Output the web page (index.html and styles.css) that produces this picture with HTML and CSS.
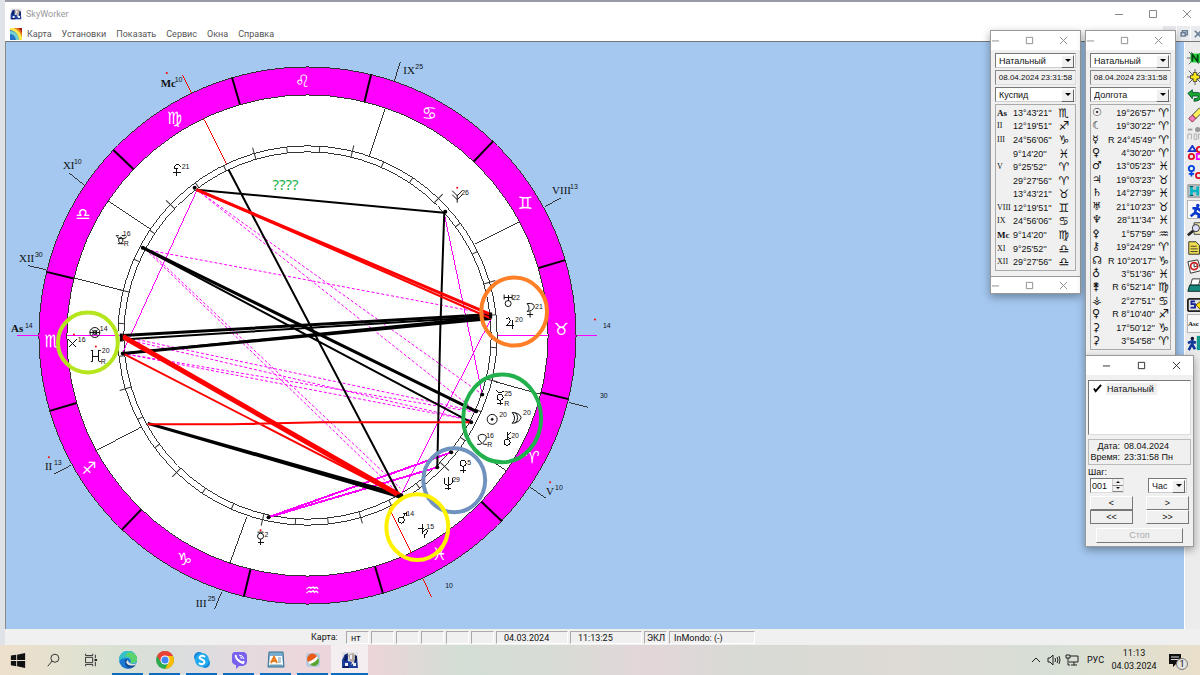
FILE: index.html
```html
<!DOCTYPE html>
<html lang="ru">
<head>
<meta charset="utf-8">
<title>SkyWorker</title>
<link rel="stylesheet" href="styles.css">
</head>
<body>
<svg class="defs" aria-hidden="true">
  <symbol id="i-min" viewBox="0 0 10 10"><path d="M1 5.5h8"/></symbol>
  <symbol id="i-max" viewBox="0 0 10 10"><path d="M1.5 1.5h7v7h-7z"/></symbol>
  <symbol id="i-close" viewBox="0 0 10 10"><path d="M1 1l8 8M9 1l-8 8"/></symbol>
  <symbol id="i-app" viewBox="0 0 18 18"><path fill="#e4e2e4" d="M1 1h16v16H1z"/><path fill="#1d3f9c" d="M1 17V9l3-6 3 2v5l4 1-1 3 3-2V8l3-2 1 11z"/><path fill="#b3a89a" d="M7 4l5-2 3 3-2 6-4-1z"/><path fill="#eef" d="M4 12h3v3H4zM12 12h3v3h-3zM9 4h2v4H9z"/><path fill="#0a1c5e" d="M4 4l3-2-1 7-3 2zM14 4l2 1v5l-2 1zM2 15h6v2H2z"/></symbol>
</svg>
<main class="app">
  <header class="titlebar">
    <svg class="app-icon"><use href="#i-app"/></svg>
    <span class="app-name">SkyWorker</span>
    <div class="window-buttons">
      <button aria-label="Свернуть"><svg class="glyph"><use href="#i-min"/></svg></button>
      <button aria-label="Развернуть"><svg class="glyph"><use href="#i-max"/></svg></button>
      <button aria-label="Закрыть"><svg class="glyph"><use href="#i-close"/></svg></button>
    </div>
  </header>
  <nav class="menubar">
    <svg class="menu-icon" viewBox="0 0 12 12"><path fill="#2672c4" d="M0 0h12v12H0z"/><path fill="#73d2d1" d="M0 3q8 0 9 9H6Q5 6 0 6z"/><path fill="#ffe84d" d="M0 0h12v12H9Q8 3 0 2z"/><path fill="#e8761e" d="M4 0h8v9Q10 3 4 0z"/><path fill="#a51d12" d="M8 0h4v5Q11 2 8 0z"/></svg>
    <button>Карта</button><button>Установки</button><button>Показать</button><button>Сервис</button><button>Окна</button><button>Справка</button>
    <div class="mdi-buttons">
      <button aria-label="Свернуть карту"></button>
      <button aria-label="Восстановить карту"><svg class="glyph" viewBox="0 0 10 10"><path d="M3 3V1h6v5H7M1.500 3.500h5v4h-5z"/></svg></button>
      <button aria-label="Закрыть карту"><svg class="glyph"><use href="#i-close"/></svg></button>
    </div>
  </nav>
  <section class="workspace">
    <svg class="chart" viewBox="5 41 620 588" preserveAspectRatio="xMinYMin meet" role="img" aria-label="Натальная карта">
      <defs>
        <g id="spoke">
          <path class="divider" d="M38 335h28M548 335h28"/>
          <path class="tick" d="M111 335h12M491 335h12"/>
          <path class="tick" transform="rotate(10 307 335)" d="M117 335h6M491 335h6"/>
          <path class="tick" transform="rotate(20 307 335)" d="M117 335h6M491 335h6"/>
        </g>
      </defs>
      <circle class="wheel" cx="307" cy="335" r="269"/>
      <circle class="band" cx="307" cy="335" r="255"/>
      <circle class="hair" cx="307" cy="335" r="269"/>
      <circle class="hair" cx="307" cy="335" r="241"/>
      <circle class="hair" cx="307" cy="335" r="190"/>
      <circle class="hair" cx="307" cy="335" r="184"/>
      <g transform="rotate(13.7 307 335)">
        <use href="#spoke"/>
        <use href="#spoke" transform="rotate(30 307 335)"/>
        <use href="#spoke" transform="rotate(60 307 335)"/>
        <use href="#spoke" transform="rotate(90 307 335)"/>
        <use href="#spoke" transform="rotate(120 307 335)"/>
        <use href="#spoke" transform="rotate(150 307 335)"/>
      </g>

      <path class="hair" d="M107 200l42 28M68 172l15 12M72 277l50 13M27 265l18 4M385 107l-16 48M400 61l-6 19M519 221l-44 22M545 206l16-9M494 381l47 13M569 402l19 5M495 463l12 8M530 487l16 11M246 517l-17 47M221 592l-7 17M140 427l-46 24M70 465l-17 9"/>
      <path class="cusp-mc" d="M203 118l23 45M182 74l9 18M389 508l22 45M423 579l8 18"/>
      <path class="cusp-as" d="M16 335h22M66 335h54M498 335h50M577 335h20"/>

      <g class="aspect dashed">
        <path d="M196 189L482 394M196 189L476 411M145 249L491 314M145 249L398 493M148 250L400 488M122 336L476 411M122 338L471 420M122 353L476 412M122 353L471 420"/>
      </g>
      <g class="aspect trine">
        <path d="M196 190L122 352M444 213L482 394M491 318L401 494"/>
        <path class="mid" d="M268 517L451 452M268 517L437 467"/>
      </g>
      <g class="aspect black">
        <path d="M196 189L444 212M228 169L399 495M145 249L471 422M122 339L491 316"/>
        <path class="mid" d="M444 212L440 330L437 467M122 353L491 316"/>
        <path class="heavy" d="M142 247L476 411M122 335L491 314M122 353L491 318M147 423L398 494M147 423L401 497"/>
      </g>
      <g class="aspect red">
        <path class="thick" d="M122 336L399 495"/>
        <path d="M122 353L398 495M147 424L230 424L320 422H471M196 189L491 318"/>
        <path class="heavy" d="M196 189L491 314"/>
      </g>
      <g class="dots">
        <circle cx="194" cy="187" r="2"/><circle cx="142" cy="247" r="2"/><circle cx="445" cy="211" r="2"/><circle cx="482" cy="394" r="2"/><circle cx="476" cy="411" r="2"/><circle cx="471" cy="422" r="2"/><circle cx="451" cy="452" r="2"/><circle cx="437" cy="467" r="2"/><circle cx="268" cy="517" r="2"/><circle cx="398" cy="496" r="2"/><circle cx="401" cy="495" r="2"/><circle cx="122" cy="353" r="2"/><path d="M119 333h3v8h-3zM489 312h3v6h-3z"/>
      </g>

      <g class="sign">
        <text x="302" y="86">♌&#xFE0E;</text><text x="429" y="118">♋&#xFE0E;</text><text x="525" y="208">♊&#xFE0E;</text><text x="561" y="335">♉&#xFE0E;</text><text x="532" y="463">♈&#xFE0E;</text><text x="439" y="560">♓&#xFE0E;</text><text x="312" y="596">♒&#xFE0E;</text><text x="184" y="565">♑&#xFE0E;</text><text x="88" y="474">♐&#xFE0E;</text><text x="51" y="347">♏&#xFE0E;</text><text x="82" y="219">♎&#xFE0E;</text><text x="174" y="123">♍&#xFE0E;</text>
      </g>

      <g class="house">
        <text class="strong" x="160" y="86">Mc</text><text x="62" y="168">XI</text><text x="18" y="261">XII</text><text class="strong" x="10" y="332">As</text><text x="44" y="470">II</text><text x="195" y="607">III</text><text x="403" y="73">IX</text><text x="552" y="193">VIII</text><text x="546" y="495">V</text>
      </g>

      <g class="planet">
        <path class="bold" d="M180 166q-3-4-6-1-1 3 3 3-4 1-4-2"/><path class="bold" d="M176 168v7M172 172h8"/>
        <path d="M115 235h3M121 235h3M117 243h3q-3-2-2-5 2-3 4 0 1 3-2 5h3M116 236q1 2 5 2t5-2"/>
        <path d="M452 190l5 5 5-5M452 194l5 5 5-5M457 194v8"/>
        <circle cx="94" cy="332" r="5"/><circle cx="94" cy="332" r="2"/><path d="M91 329l6 6M97 329l-6 6M89 332h10"/>
        <path class="bold" d="M68 339l8 8M76 339l-8 8"/>
        <path class="bold" d="M92 350v11M98 350v11"/><path d="M92 356h6M90 350h2M98 350h2M90 361h2M98 361h2"/>
        <circle cx="508" cy="303" r="3"/><path class="bold" d="M508 300v-6M504 297h8"/><path d="M504 294v5M512 294v5"/>
        <path class="bold" d="M506 318q4-2 4 2 0 3-4 5h8M512 319v9"/>
        <path d="M527 303q8-1 7 4-2 4-7 4 4-3 0-8zM530 311v6M527 314h6"/>
        <circle class="bold" cx="500" cy="397" r="3"/><path class="bold" d="M496 390q4 5 8 0M500 400v5M497 403h6"/>
        <circle cx="492" cy="419" r="5"/><circle class="dot" cx="492" cy="419" r="1"/>
        <path d="M512 412q8 1 9 5-1 5-9 6 5-5 0-11zM515 412q5 5 0 11"/>
        <path d="M477 444h3q2 0 1-2-4-3-3-6 1-2 4-2t4 2q1 3-3 6-1 2 1 2h3"/>
        <circle class="bold" cx="507" cy="442" r="3"/><path class="bold" d="M507 439v-7M507 436l4-4M507 436l4 3"/>
        <circle class="bold" cx="463" cy="463" r="3"/><path class="bold" d="M463 466v7M460 470h6"/>
        <path class="bold" d="M444 478v4q0 3 4 3t4-3v-4M448 477v13M445 488h6"/>
        <circle class="bold" cx="401" cy="520" r="3"/><path class="bold" d="M403 517l3-5M403 513h3v3"/>
        <path class="bold" d="M422 524v10M423 531q4-3 4 0 0 2-3 4v3M418 528h6"/>
        <circle cx="260" cy="536" r="3"/><path class="bold" d="M260 539v6M257 542h6"/><path d="M257 532h6"/>
      </g>

      <g class="deg">
        <text x="174" y="81">10</text><text x="73" y="163">10</text><text x="34" y="256">30</text><text x="24" y="327">14</text><text x="53" y="465">13</text><text x="207" y="601">25</text><text x="415" y="68">25</text><text x="570" y="188">13</text><text x="603" y="327">14</text><text x="600" y="398">30</text><text x="555" y="490">10</text><text x="445" y="588">10</text>
        <text x="181" y="168">21</text><text x="122" y="235">16</text><text x="123" y="245">R</text><text x="461" y="194">26</text><text x="99" y="330">14</text><text x="77" y="342">16</text><text x="101" y="353">20</text><text x="100" y="364">R</text><text x="512" y="299">22</text><text x="535" y="308">21</text><text x="515" y="321">20</text><text x="504" y="396">25</text><text x="504" y="406">R</text><text x="499" y="417">20</text><text x="523" y="415">20</text><text x="486" y="438">16</text><text x="487" y="447">R</text><text x="511" y="438">20</text><text x="467" y="465">5</text><text x="452" y="482">29</text><text x="406" y="516">14</text><text x="426" y="529">15</text><text x="264" y="537">2</text>
      </g>
      <g class="red-dots"><circle cx="166" cy="72" r="1"/><circle cx="457" cy="187" r="1"/><circle cx="73" cy="334" r="1"/><circle cx="95" cy="346" r="1"/><circle cx="48" cy="457" r="1"/><circle cx="260" cy="530" r="1"/><circle cx="550" cy="482" r="1"/><circle cx="595" cy="319" r="1"/></g>
      <g class="mark">
        <circle class="lime" cx="87" cy="342" r="30"/>
        <ellipse class="blue" cx="454" cy="480" rx="31" ry="32"/>
        <ellipse class="green" cx="502" cy="418" rx="39" ry="44"/>
        <ellipse class="orange" cx="514" cy="311" rx="33" ry="34"/>
        <ellipse class="yellow" cx="417" cy="527" rx="31" ry="33"/>
      </g>
      <text class="query" x="272" y="189">????</text>
    </svg>

    <aside class="toolbar">
      <button aria-label="Новая карта"><svg viewBox="0 0 18 18"><path stroke="#555" d="M2 2l14 14M16 2L2 16M0 9h18"/><path fill="#22d43c" d="M4 4h11v10H4z"/><path stroke="#041" stroke-width="2" d="M6 13V5l6 8V5"/></svg></button>
      <button aria-label="Солнце"><svg viewBox="0 0 18 18"><path stroke="#555" d="M2 2l14 14M16 2L2 16M9 0v18M0 9h18"/><path fill="#ffe818" stroke="#443" d="M7 4h4v3h3v4h-3v3H7v-3H4V7h3z"/></svg></button>
      <button aria-label="Отменить"><svg viewBox="0 0 18 18"><path fill="#1ca62e" stroke="#053" d="M1 6l5-4v3h6q5 1 4 6-2 4-8 4v-3q5 0 5-3H6v3z"/></svg></button>
      <button aria-label="Стереть"><svg viewBox="0 0 18 18"><path fill="#fff25a" stroke="#333" d="M6 9l8-8 4 4-8 8z"/><path fill="#f17bc7" stroke="#822" d="M2 13l4-4 4 4-4 4z"/></svg></button>
      <button aria-label="Перейти" disabled><svg viewBox="0 0 18 18"><path stroke="#999" stroke-width="2" d="M1 4h5"/><circle fill="#999" cx="12" cy="4" r="3"/><path stroke="#aaa" d="M1 15V9h4v6M8 9h3v6H8zM13 15V9h5"/></svg></button>
      <button aria-label="Аспекты"><svg viewBox="0 0 18 18"><path stroke="#13c" stroke-width="2" d="M2 7l4-6 4 6z"/><circle stroke="#d12" stroke-width="2" cx="14" cy="5" r="3"/><circle stroke="#d12" stroke-width="2" cx="5" cy="13" r="3"/><path stroke="#e0f" stroke-width="2" d="M11 10h6v6h-6z"/></svg></button>
      <button aria-label="Синастрия"><svg viewBox="0 0 18 18"><circle stroke="#04d" stroke-width="2" cx="5" cy="5" r="3"/><path stroke="#04d" stroke-width="2" d="M5 8v6M2 11h6"/><circle stroke="#d12" stroke-width="2" cx="13" cy="13" r="3"/><path stroke="#d12" stroke-width="2" d="M15 10l3-4"/></svg></button>
      <button aria-label="Дома"><svg viewBox="0 0 18 18"><path fill="#b8c5c8" stroke="#888" d="M1 2h16v14H1z"/><path stroke="#06b5c4" stroke-width="3" d="M5 4v10M12 4v10M5 9h7"/><path stroke="#044" d="M3 4h4M3 14h4"/></svg></button>
      <button class="pressed" aria-label="Динамика"><svg viewBox="0 0 18 18"><circle fill="#0b38cc" cx="11" cy="4" r="2"/><path stroke="#0b38cc" stroke-width="3" d="M5 7h6l3 3M9 7l-1 5 4 2v4M8 12l-5 4"/></svg></button>
      <button aria-label="Лупа"><svg viewBox="0 0 18 18"><path fill="#eee9b0" stroke="#333" d="M8 2h7l3 4v9H8z"/><circle fill="#ddf" stroke="#222" cx="10" cy="8" r="4"/><path stroke="#222" stroke-width="3" d="M7 11l-6 5"/></svg></button>
      <button aria-label="Текст"><svg viewBox="0 0 18 18"><path fill="#f2df50" stroke="#222" d="M2 2h8l4 4v10H2z"/><path stroke="#333" d="M4 7h7M4 10h8M4 13h8"/></svg></button>
      <button aria-label="Время"><svg viewBox="0 0 18 18"><path fill="#fff" stroke="#222" d="M1 3l11-2 4 12-12 3z"/><circle stroke="#c22" stroke-width="2" cx="8" cy="8" r="4"/><path stroke="#222" d="M8 5v4l3-1"/></svg></button>
      <button aria-label="Печать"><svg viewBox="0 0 18 18"><path fill="#fff" stroke="#222" d="M6 1h9l-2 7H4z"/><path fill="#16877b" stroke="#022" d="M3 8h14v7H1z"/></svg></button>
      <button aria-label="Сохранить"><svg viewBox="0 0 18 18"><rect fill="#ddd" stroke="#222" stroke-width="2" x="1" y="2" width="17" height="14" rx="2"/><path stroke="#129" stroke-width="2" d="M9 5H5v3h4v4H4"/><path fill="#ffe200" stroke="#540" d="M10 9l5-4v3h3v3h-3v3z"/></svg></button>
      <button class="pressed word">Asc</button>
      <button aria-label="Выход"><svg viewBox="0 0 18 18"><path fill="#149b90" d="M11 1h7v16h-7z"/><circle fill="#113" cx="6" cy="4" r="2"/><path stroke="#113a99" stroke-width="3" d="M6 6v5l3 5M5 11l-3 6M1 9l5-2 4 2"/></svg></button>
    </aside>
  </section>
  <footer class="statusbar">
    <span class="status-label">Карта:</span>
    <span class="cell s">нт</span><span class="cell s"></span><span class="cell s"></span><span class="cell s"></span><span class="cell s"></span><span class="cell s"></span>
    <span class="cell m">04.03.2024</span><span class="cell m">11:13:25</span><span class="cell s flush">ЭКЛ</span><span class="cell l">InMondo: (-)</span>
  </footer>
</main>

<section class="float cusps">
  <div class="float-title">
    <button aria-label="Свернуть"><svg class="glyph"><use href="#i-min"/></svg></button><button aria-label="Развернуть"><svg class="glyph"><use href="#i-max"/></svg></button><button aria-label="Закрыть"><svg class="glyph"><use href="#i-close"/></svg></button>
  </div>
  <div class="float-body">
    <div class="combo"><select aria-label="Карта"><option>Натальный</option></select></div>
    <output class="stamp">08.04.2024 23:31:58</output>
    <div class="combo"><select aria-label="Показатель"><option>Куспид</option></select></div>
    <div class="list">
      <table class="short" aria-label="Куспиды">
        <tr><th>As</th><td>13°43'21''</td><td>♏&#xFE0E;</td></tr>
        <tr><th class="thin">II</th><td>12°19'51''</td><td>♐&#xFE0E;</td></tr>
        <tr><th class="thin">III</th><td>24°56'06''</td><td>♑&#xFE0E;</td></tr>
        <tr><th></th><td>9°14'20''</td><td>♓&#xFE0E;</td></tr>
        <tr><th class="thin">V</th><td>9°25'52''</td><td>♈&#xFE0E;</td></tr>
        <tr><th></th><td>29°27'56''</td><td>♈&#xFE0E;</td></tr>
        <tr><th></th><td>13°43'21''</td><td>♉&#xFE0E;</td></tr>
        <tr><th class="thin">VIII</th><td>12°19'51''</td><td>♊&#xFE0E;</td></tr>
        <tr><th class="thin">IX</th><td>24°56'06''</td><td>♋&#xFE0E;</td></tr>
        <tr><th>Mc</th><td>9°14'20''</td><td>♍&#xFE0E;</td></tr>
        <tr><th class="thin">XI</th><td>9°25'52''</td><td>♎&#xFE0E;</td></tr>
        <tr><th class="thin">XII</th><td>29°27'56''</td><td>♎&#xFE0E;</td></tr>
      </table>
    </div>
  </div>
  <div class="float-title second">
    <button aria-label="Свернуть"><svg class="glyph"><use href="#i-min"/></svg></button><button aria-label="Развернуть"><svg class="glyph"><use href="#i-max"/></svg></button><button aria-label="Закрыть"><svg class="glyph"><use href="#i-close"/></svg></button>
  </div>
</section>

<section class="float planets">
  <div class="float-title">
    <button aria-label="Свернуть"><svg class="glyph"><use href="#i-min"/></svg></button><button aria-label="Развернуть"><svg class="glyph"><use href="#i-max"/></svg></button><button aria-label="Закрыть"><svg class="glyph"><use href="#i-close"/></svg></button>
  </div>
  <div class="float-body">
    <div class="combo"><select aria-label="Карта"><option>Натальный</option></select></div>
    <output class="stamp">08.04.2024 23:31:58</output>
    <div class="combo"><select aria-label="Показатель"><option>Долгота</option></select></div>
    <div class="list">
      <table class="long" aria-label="Долготы">
        <tr><th>☉</th><td>19°26'57''</td><td>♈&#xFE0E;</td></tr>
        <tr><th>☾</th><td>19°30'22''</td><td>♈&#xFE0E;</td></tr>
        <tr><th>☿</th><td>R 24°45'49''</td><td>♈&#xFE0E;</td></tr>
        <tr><th>♀</th><td>4°30'20''</td><td>♈&#xFE0E;</td></tr>
        <tr><th>♂</th><td>13°05'23''</td><td>♓&#xFE0E;</td></tr>
        <tr><th>♃</th><td>19°03'23''</td><td>♉&#xFE0E;</td></tr>
        <tr><th>♄</th><td>14°27'39''</td><td>♓&#xFE0E;</td></tr>
        <tr><th>♅</th><td>21°10'23''</td><td>♉&#xFE0E;</td></tr>
        <tr><th>♆</th><td>28°11'34''</td><td>♓&#xFE0E;</td></tr>
        <tr><th>⚴</th><td>1°57'59''</td><td>♒&#xFE0E;</td></tr>
        <tr><th>⚷</th><td>19°24'29''</td><td>♈&#xFE0E;</td></tr>
        <tr><th>☊</th><td>R 10°20'17''</td><td>♑&#xFE0E;</td></tr>
        <tr><th>♁</th><td>3°51'36''</td><td>♓&#xFE0E;</td></tr>
        <tr><th>⚵</th><td>R 6°52'14''</td><td>♍&#xFE0E;</td></tr>
        <tr><th>⚶</th><td>2°27'51''</td><td>♋&#xFE0E;</td></tr>
        <tr><th>♀</th><td>R 8°10'40''</td><td>♐&#xFE0E;</td></tr>
        <tr><th>⚳</th><td>17°50'12''</td><td>♑&#xFE0E;</td></tr>
        <tr><th>⚳</th><td>3°54'58''</td><td>♈&#xFE0E;</td></tr>
      </table>
    </div>
  </div>
</section>

<section class="float stepper">
  <div class="float-title active">
    <button aria-label="Свернуть"><svg class="glyph"><use href="#i-min"/></svg></button><button aria-label="Развернуть"><svg class="glyph"><use href="#i-max"/></svg></button><button aria-label="Закрыть"><svg class="glyph"><use href="#i-close"/></svg></button>
  </div>
  <div class="step-body">
    <div class="chart-list"><svg class="check" viewBox="0 0 10 10"><path d="M1 5l2 3 6-7"/></svg><span>Натальный</span></div>
    <dl class="moment"><dt>Дата:</dt><dd>08.04.2024</dd><dt>Время:</dt><dd>23:31:58 Пн</dd></dl>
    <label class="step-label" for="step">Шаг:</label>
    <div class="step-row">
      <div class="spin"><input id="step" type="text" value="001"><span class="spin-keys"><button aria-label="Больше"></button><button aria-label="Меньше"></button></span></div>
      <div class="combo unit"><select aria-label="Единица"><option>Час</option></select></div>
    </div>
    <div class="keys">
      <button class="raised">&lt;</button><button class="raised">&gt;</button>
      <button class="raised focus">&lt;&lt;</button><button class="raised">&gt;&gt;</button>
    </div>
    <button class="raised stop" disabled>Стоп</button>
  </div>
</section>

<footer class="taskbar">
  <div class="launch">
    <button aria-label="Пуск"><svg viewBox="0 0 18 18"><path fill="#111" d="M1 4l6-1v6H1zM8 3l9-2v8H8zM1 10h6v6l-6-1zM8 10h9v8l-9-2z"/></svg></button>
    <button aria-label="Поиск"><svg viewBox="0 0 18 18"><path class="line" d="M7 10l-5 6"/><circle class="line" cx="10" cy="7" r="4.500"/></svg></button>
    <button aria-label="Представление задач"><svg viewBox="0 0 18 18"><path class="line" d="M4 2v2h8V2M4 16v-2h8v2M4 6h8v6H4zM15 3v4M15 11v5"/><path stroke="#111" stroke-width="2" d="M14 9h3"/></svg></button>
  </div>
  <div class="apps">
    <button class="open" aria-label="Edge"><svg viewBox="0 0 18 18"><circle fill="#1b78d0" cx="9" cy="9" r="9"/><path fill="#35c1ca" d="M0 9a9 9 0 0 1 18-1c1 4-3 6-7 4 2-2 0-5-3-5-4 0-7 1-8 4z"/><path fill="#5bd36c" d="M11 1q8 2 7 8-2 4-7 3 2-2 0-5-3-3-5-1 2-5 5-5z"/><path fill="#114c92" d="M6 9q-1 7 5 8 4 0 6-4-5 3-8 0-2-2-1-5z"/><path fill="#e3dfe0" d="M9 9q0 4 6 4l3-1-2 2q-7 2-9-3z"/></svg></button>
    <button class="open" aria-label="Chrome"><svg viewBox="0 0 18 18"><circle fill="#2da94f" cx="9" cy="9" r="9"/><path fill="#ea4335" d="M1 5a9 9 0 0 1 16 0H9L5 11z"/><path fill="#fbbc05" d="M17 5a9 9 0 0 1-8 13l4-7-2-6z"/><circle fill="#fff" cx="9" cy="9" r="4.500"/><circle fill="#4285f4" cx="9" cy="9" r="3.500"/></svg></button>
    <button class="open" aria-label="Skype"><svg viewBox="0 0 18 18"><circle fill="#1587d8" cx="6" cy="6" r="5"/><circle fill="#1587d8" cx="12" cy="12" r="5"/><circle fill="#23a9ee" cx="9" cy="9" r="7"/><path stroke="#fff" stroke-width="2" d="M12 6q-2-2-4-1-3 2 0 3l2 1q3 2 0 4-2 1-4-1"/></svg></button>
    <button class="open" aria-label="Viber"><svg viewBox="0 0 18 18"><path fill="#7861ee" d="M4 1h10q3 1 3 4v6q-1 4-5 4H9l-3 3v-4q-4-1-4-4V4q0-2 2-3z"/><path stroke="#fff" stroke-width="2" d="M6 4q-1 2 2 5 2 2 5 3l1-2"/><path stroke="#fff" d="M9 4q4 0 5 4M10 6q2 0 2 2"/></svg></button>
    <button class="open" aria-label="WordPad"><svg viewBox="0 0 18 18"><path fill="#76aed3" stroke="#3d718d" d="M2 1h14l1 15H1z"/><path fill="#fff" d="M3 5h12l1 9H2z"/><path stroke="#ea781c" stroke-width="2" d="M4 12l3-6 3 6M5 10h4"/><path stroke="#69a" d="M11 7h3M11 9h3M11 11h3M3 14h12"/></svg></button>
    <button class="open" aria-label="Редактор"><svg viewBox="0 0 18 18"><rect fill="#b8c9dc" x="2" y="2" width="14" height="14" rx="3"/><circle fill="#fff" cx="9" cy="9" r="5"/><path fill="#e85c17" d="M4 11a5 5 0 0 1 9-6q-2 3-9 6z"/><path fill="#58a52d" d="M14 7a5 5 0 0 1-8 6q6-2 8-6z"/></svg></button>
    <button class="open current" aria-label="SkyWorker"><svg><use href="#i-app"/></svg></button>
  </div>
  <div class="tray">
    <svg viewBox="0 0 14 14"><path class="line" d="M3 9l4-4 4 4"/></svg>
    <svg viewBox="0 0 14 14"><path class="line" d="M1 5h2l3-3v10L3 9H1zM8 5q1 2 0 4M10 4q2 3 0 6M12 3q2 4 0 8"/></svg>
    <svg viewBox="0 0 14 14"><path class="line" d="M5 3h8v6H4M9 9v3M6 12h6M1 2h4v3H1zM3 5v7h2"/></svg>
    <span class="lang">РУС</span>
    <time class="clock" datetime="2024-03-04T11:13">11:13<br>04.03.2024</time>
    <button class="notice" aria-label="Уведомления"><svg viewBox="0 0 14 14"><path fill="#111" d="M1 1h12v10H8l-3 3v-3H1z"/><path stroke="#ddd" d="M3 4h8M3 6.500h8"/></svg><span class="badge">1</span></button>
  </div>
</footer>
</body>
</html>
```
FILE: styles.css
```css
* { box-sizing: border-box; }
body {
  margin: 0;
  height: 100vh;
  display: flex;
  flex-direction: column;
  overflow: hidden;
  position: relative;
  background: #dfe3e8;
  color: #111;
  font: 9px/12px "Liberation Sans", Arial, sans-serif;
}
button, select, input { margin: 0; padding: 0; border: 0; background: none; color: inherit; font: inherit; border-radius: 0; }
svg { display: block; fill: none; }
.defs { position: absolute; width: 0; height: 0; }
.glyph { width: 10px; height: 10px; stroke: currentColor; stroke-width: 1; }

.app {
  flex: 1;
  min-height: 0;
  display: flex;
  flex-direction: column;
  margin-left: 5px;
  border-top: 2px solid #989ba6;
  background: #fff;
}
.titlebar { display: flex; align-items: center; height: 24px; padding-left: 5px; gap: 4px; color: #999; font-family: Roboto, sans-serif; }
.app-icon { width: 12px; height: 12px; }
.window-buttons { display: flex; margin-left: auto; margin-right: -4px; }
.window-buttons button { width: 34px; display: grid; place-items: center; color: #888; }

.menubar { display: flex; align-items: center; height: 15px; padding-left: 5px; gap: 10px; color: #555; font-family: Roboto, sans-serif; overflow: hidden; }
.menu-icon { width: 12px; height: 12px; margin-right: -5px; }
.mdi-buttons { display: flex; align-self: stretch; gap: 1px; margin-left: auto; margin-right: -4px; }
.mdi-buttons button { width: 13px; display: grid; place-items: center; background: #e9ebee; color: #6b8096; }
.mdi-buttons .glyph { width: 8px; height: 8px; stroke-width: 2; }

.workspace { flex: 1; min-height: 0; display: flex; justify-content: space-between; border-left: 1px solid #888; border-top: 1px solid #777; background: #a4c8f0; }
.chart { flex: 1; min-width: 0; height: 100%; }

.toolbar { flex: none; width: 16px; padding: 6px 0 0 2px; background: #ececec; overflow: hidden; display: grid; grid-template-columns: 20px; grid-auto-rows: 19px; align-content: start; border-left: 1px solid #fff; }
.toolbar button { display: flex; align-items: center; }
.toolbar svg { width: 16px; height: 16px; flex: none; }
.toolbar .pressed { background: #f8f8f8; border: 1px solid #b5b5b5; }
.toolbar .word { font: bold 7px/12px "Liberation Serif", serif; }

.wheel { fill: #fff; }
.band { stroke: #f0f; stroke-width: 28; }
.hair { stroke: #333; stroke-width: 1; shape-rendering: crispEdges; }
.divider { stroke: #000; stroke-width: 2; }
.tick { stroke: #333; stroke-width: 1; }
.cusp-mc { stroke: #f00; stroke-width: 1; shape-rendering: crispEdges; }
.cusp-as { stroke: #f0f; stroke-width: 1; shape-rendering: crispEdges; }
.aspect { stroke-width: 2; }
.aspect .mid { stroke-width: 2; }
.aspect .heavy { stroke-width: 3; }
.aspect .thick { stroke-width: 5; }
.dashed { stroke: #f0f; stroke-width: 1; stroke-dasharray: 3 2; }
.trine { stroke: #f0f; stroke-width: 1; shape-rendering: crispEdges; }
.black { stroke: #000; }
.red { stroke: #f00; }
.dots { fill: #000; }
.red-dots { fill: #f00; }
.sign { fill: #fff; stroke: #fff; stroke-width: 0; font: bold 17px "DejaVu Sans", sans-serif; text-anchor: middle; }
.house { fill: #111; font: 11px "Liberation Serif", serif; }
.house .strong { font-weight: bold; }
.planet { stroke: #111; stroke-width: 1; }
.planet .bold { stroke-width: 1; shape-rendering: crispEdges; }
.planet .dot { fill: #111; }
.deg { fill: #111; font: 7px "Liberation Sans", sans-serif; }
.mark { stroke-width: 4; }
.lime { stroke: #b5e61d; }
.blue { stroke: #7092be; }
.green { stroke: #22b14c; }
.orange { stroke: #ff7f27; }
.yellow { stroke: #fff200; }
.query { fill: #22b14c; font: 15px "Noto Sans", sans-serif; }

.statusbar { flex: none; display: flex; align-items: center; gap: 2px; height: 16px; padding: 1px 0 1px 306px; background: #f0f0f0; font-family: Roboto, sans-serif; }
.status-label { width: 33px; }
.cell { height: 13px; padding-left: 4px; border: 1px solid #aaa; border-color: #aaa #fff #fff #aaa; white-space: nowrap; }
.cell.s { width: 23px; }
.cell.m { width: 72px; padding-left: 7px; }
.cell.l { width: 86px; }
.cell.flush { padding-left: 2px; }

.float { position: absolute; border: 1px solid #999; background: #f0f0f0; box-shadow: 0 3px 8px rgba(0, 0, 0, .35); }
.cusps { top: 30px; right: 119px; width: 91px; }
.planets { top: 30px; right: 24px; width: 91px; height: 326px; }
.stepper { top: 355px; right: 6px; width: 109px; }
.float-title { display: flex; justify-content: space-between; align-items: center; height: 19px; padding-right: 12px; background: #fff; color: #888; }
.float-title.second { height: 17px; border-top: 1px solid #999; }
.float-title.active { color: #222; padding: 0 12px 0 16px; }
.float-title .glyph { width: 9px; height: 9px; }
.float-body { display: flex; flex-direction: column; gap: 2px; padding: 3px 4px 5px; }
.combo { position: relative; height: 15px; background: #fff; border: 1px solid #777; border-right-color: #ccc; border-bottom-color: #ccc; }
.combo select { display: block; width: 100%; height: 13px; padding: 0 3px; appearance: none; outline: 0; line-height: 12px; }
.combo::before { content: ""; position: absolute; right: 1px; top: 1px; width: 11px; height: 11px; background: #f0f0f0; border: 1px solid #fff; border-right-color: #666; border-bottom-color: #666; pointer-events: none; }
.combo::after { content: ""; position: absolute; right: 4px; top: 5px; border: 3px solid transparent; border-top-color: #000; border-bottom: 0; pointer-events: none; }
.stamp { display: block; height: 15px; border: 1px solid #888; border-right-color: #ddd; border-bottom-color: #ddd; text-align: center; white-space: nowrap; font-size: 8px; line-height: 13px; }
.list { border: 1px solid #aaa; padding: 1px; }
table { width: 100%; border-collapse: collapse; table-layout: fixed; }
table.short { height: 163px; }
table.long { height: 242px; }
th, td { padding: 0; line-height: 10px; white-space: nowrap; }
th { width: 16px; text-align: left; font: bold 11px/10px "DejaVu Sans", sans-serif; }
td:last-child { width: 14px; font: bold 12px/10px "DejaVu Sans", sans-serif; text-align: center; }
.short th { font: bold 9px/10px "Liberation Serif", serif; }
.short th.thin { font-weight: normal; font-size: 8px; }
.short td:last-child { width: 20px; }
.long td { text-align: right; }

.step-body { display: flex; flex-direction: column; padding: 5px 2px 3px; }
.chart-list { display: flex; align-items: flex-start; gap: 4px; height: 55px; padding: 2px 4px; background: #fff; border: 1px solid #777; border-right-color: #ddd; border-bottom-color: #ddd; }
.chart-list span { background: #f0f0f0; padding: 0 3px 0 1px; }
.check { width: 9px; height: 9px; stroke: #000; stroke-width: 2; margin-top: 1px; }
.moment { display: grid; grid-template-columns: 31px 1fr; gap: 0 4px; margin: 4px 0 0; padding: 1px 0; border: 1px solid #bbb; line-height: 11px; }
.moment dt { text-align: right; }
.moment dd { margin: 0; }
.step-label { margin-top: 1px; }
.step-row { display: flex; justify-content: space-between; padding: 0 4px 0 2px; }
.spin { display: flex; width: 34px; height: 15px; background: #fff; border: 1px solid #777; border-right-color: #ddd; border-bottom-color: #ddd; }
.spin input { width: 21px; padding-left: 1px; }
.spin-keys { flex: 1; display: grid; }
.spin-keys button { display: grid; place-items: center; background: #f0f0f0; border-bottom: 1px solid #888; border-left: 1px solid #ccc; }
.spin-keys button::before { content: ""; border: 2px solid transparent; border-bottom-color: #111; border-top: 0; }
.spin-keys button:last-child::before { border: 2px solid transparent; border-top-color: #111; border-bottom: 0; }
.combo.unit { width: 39px; }
.keys { display: grid; grid-template-columns: 43px 43px; justify-content: space-between; padding: 3px 2px 0; }
.raised { height: 14px; line-height: 11px; background: #f0f0f0; border: 1px solid #fff; border-right-color: #777; border-bottom-color: #777; }
.raised.focus { border-color: #777; }
.raised.stop { margin: 4px 8px 0; height: 15px; color: #aaa; }

.taskbar { flex: none; display: flex; height: 30px; background: linear-gradient(90deg, #eee0cb, #d9e1d4 10%, #dcdde0 16%, #ecd7dc 25%, #ecd4d9 31%, #d3ded5 38%, #d8dcd6 46%, #e3d6d9 54%, #d8dad5 62%, #dedad5 75%, #d7dfd5 88%, #e9dfca); font-family: Roboto, sans-serif; }
.launch, .apps { display: flex; }
.launch { margin-right: 1px; }
.launch button { width: 36px; display: grid; place-items: center; }
.launch svg { width: 16px; height: 16px; }
.apps button { width: 37px; display: grid; place-items: center; position: relative; }
.apps svg { width: 18px; height: 18px; }
.open::after { content: ""; position: absolute; left: 3px; right: 3px; bottom: 0; height: 2px; background: #0f6cbd; }
.open.current { background: #f4eef0; }
.open.current::after { left: 0; right: 0; }
.line { stroke: #222; stroke-width: 1; }
.tray { display: flex; align-items: center; gap: 4px; margin-left: auto; padding-right: 12px; }
.tray svg { width: 14px; height: 14px; }
.lang { margin-left: 4px; }
.clock { width: 52px; text-align: center; line-height: 13px; }
.notice { position: relative; width: 24px; padding-left: 4px; }
.badge { position: absolute; right: 0; top: 5px; width: 12px; height: 12px; border: 1px solid #777; border-radius: 50%; background: #e4e4e0; line-height: 10px; text-align: center; }
```
